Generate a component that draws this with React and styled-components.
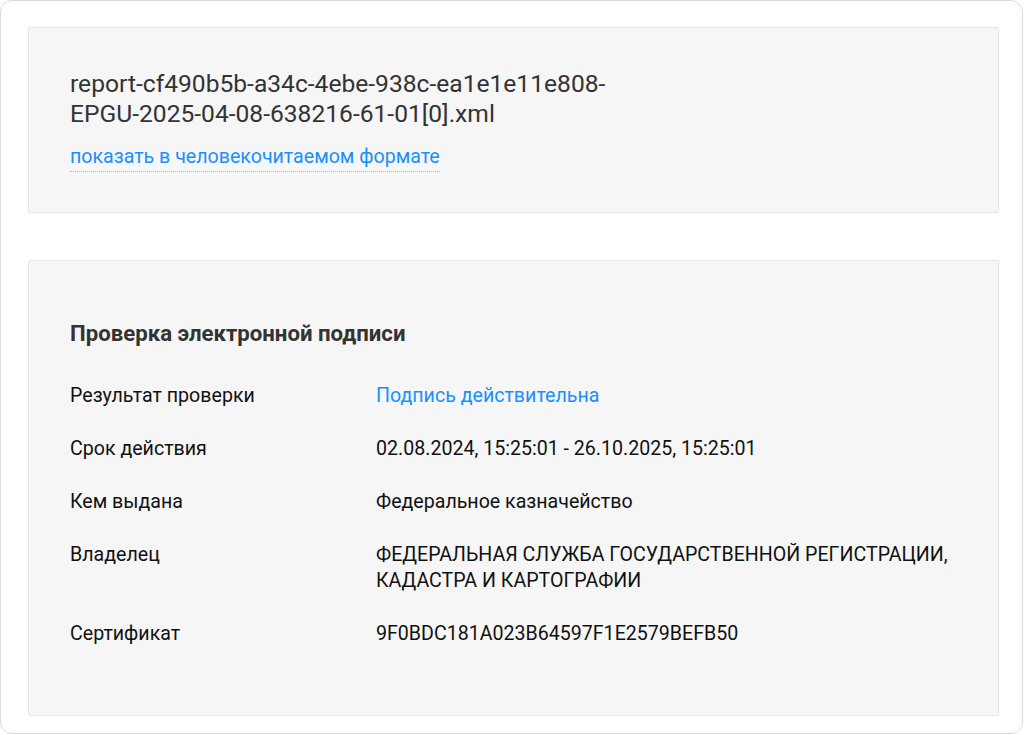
import React from "react";
import styled, { createGlobalStyle } from "styled-components";

const Global = createGlobalStyle`
  html, body { margin: 0; padding: 0; background: #fff; }
  body { font-family: Roboto, "Noto Sans", "Liberation Sans", sans-serif; }
  * { box-sizing: border-box; }
`;

const Frame = styled.div`
  width: 1023px;
  height: 734px;
  border: 1px solid #dcdcdc;
  border-radius: 12px;
  padding: 26px 23px 0 27px;
  display: flex;
  flex-direction: column;
  gap: 47px;
  overflow: hidden;
`;

const Card = styled.section`
  background: #f6f6f6;
  border: 1px solid #e6e6e6;
  border-radius: 2px;
  padding: ${(p) => p.$pad};
`;

const FileName = styled.div`
  font-size: 24.6px;
  line-height: 30px;
  color: #333;
`;

const LinkText = styled.a`
  display: inline-block;
  margin-top: 16px;
  font-size: 19.6px;
  line-height: 24px;
  color: #1890ff;
  text-decoration: none;
  border-bottom: 1px dotted #8cc4f5;
  padding-bottom: 2px;
  cursor: pointer;
`;

const Heading = styled.h2`
  margin: 0 0 36px;
  font-size: 22.2px;
  line-height: 28px;
  font-weight: 700;
  color: #333;
`;

const Rows = styled.div`
  display: flex;
  flex-direction: column;
  gap: 27px;
`;

const Row = styled.div`
  display: grid;
  grid-template-columns: 306px 1fr;
  font-size: 19.6px;
  line-height: 26px;
  color: #111;
`;

const Value = styled.div`
  color: ${(p) => (p.$accent ? "#1890ff" : "#111")};
  max-width: 600px;
`;

const rows = [
  ["Результат проверки", "Подпись действительна", true],
  ["Срок действия", "02.08.2024, 15:25:01 - 26.10.2025, 15:25:01"],
  ["Кем выдана", "Федеральное казначейство"],
  ["Владелец", "ФЕДЕРАЛЬНАЯ СЛУЖБА ГОСУДАРСТВЕННОЙ РЕГИСТРАЦИИ, КАДАСТРА И КАРТОГРАФИИ"],
  ["Сертификат", "9F0BDC181A023B64597F1E2579BEFB50"],
];

export default function App() {
  return (
    <>
      <Global />
      <Frame>
        <Card $pad="41px 41px 40px">
          <FileName>
            report-cf490b5b-a34c-4ebe-938c-ea1e1e11e808-
            <br />
            EPGU-2025-04-08-638216-61-01[0].xml
          </FileName>
          <LinkText>показать в человекочитаемом формате</LinkText>
        </Card>
        <Card $pad="58px 41px 68px">
          <Heading>Проверка электронной подписи</Heading>
          <Rows>
            {rows.map(([l, v, a]) => (
              <Row key={l}>
                <div>{l}</div>
                <Value $accent={a}>{v}</Value>
              </Row>
            ))}
          </Rows>
        </Card>
      </Frame>
    </>
  );
}
